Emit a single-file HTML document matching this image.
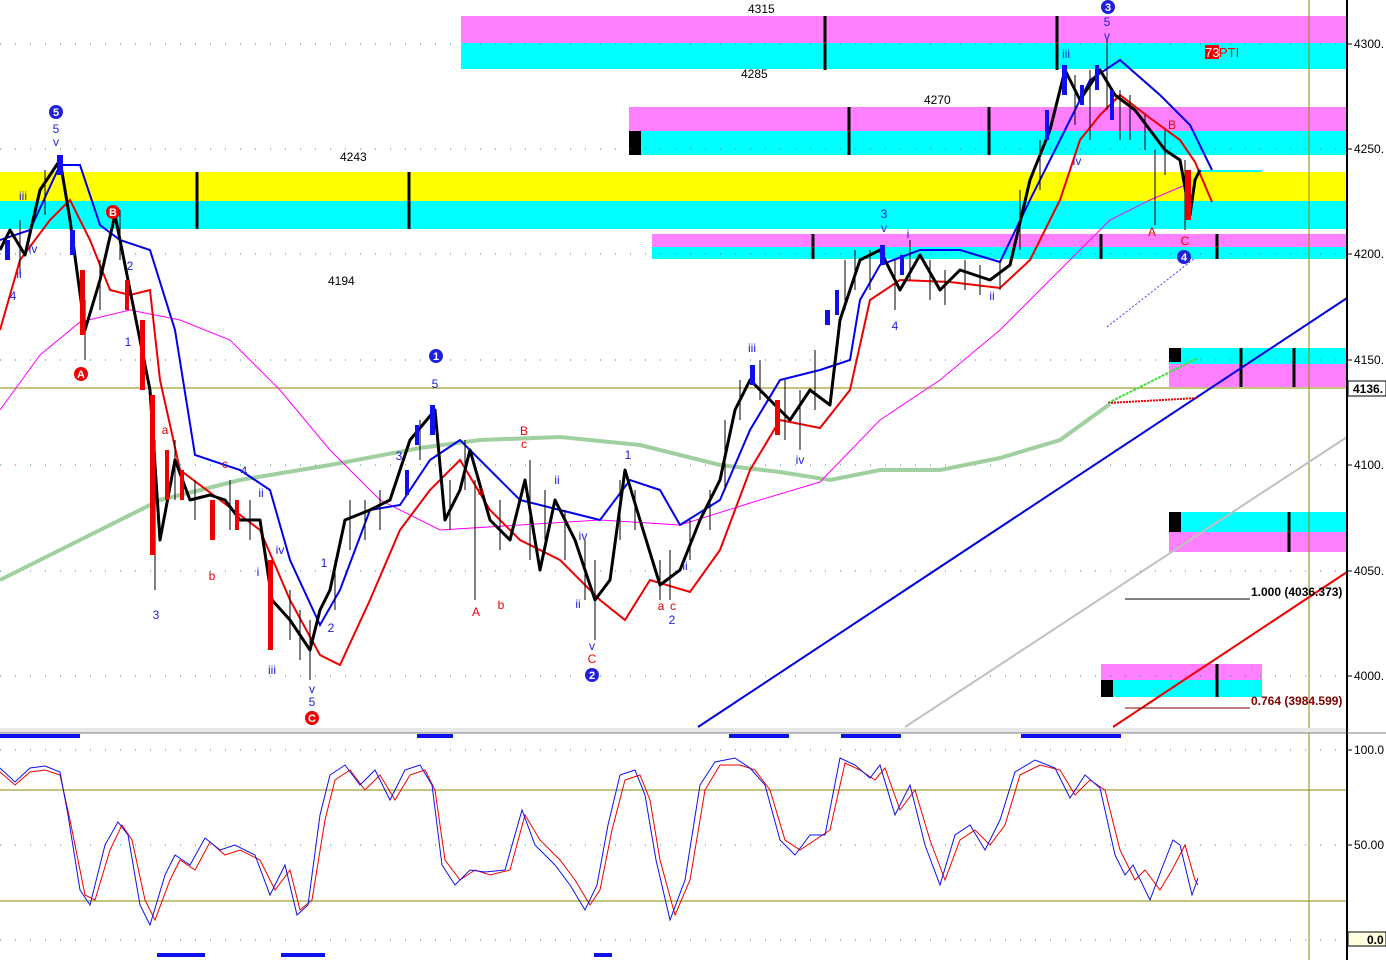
<!DOCTYPE html>
<html><head><meta charset="utf-8"><style>
html,body{margin:0;padding:0;background:#fff;}
svg{display:block;font-family:"Liberation Sans",sans-serif;}
</style></head><body>
<svg width="1386" height="960" viewBox="0 0 1386 960" xmlns="http://www.w3.org/2000/svg">
<rect width="1386" height="960" fill="#fff"/>
<rect x="461" y="16" width="886" height="27" fill="#ff80ff"/>
<rect x="461" y="43" width="886" height="26" fill="#00ffff"/>
<rect x="629" y="107" width="718" height="24" fill="#ff80ff"/>
<rect x="629" y="131" width="718" height="24" fill="#00ffff"/>
<rect x="629" y="131" width="12" height="24" fill="#000"/>
<rect x="0" y="172" width="1347" height="29" fill="#ffff00"/>
<rect x="0" y="201" width="1347" height="28" fill="#00ffff"/>
<rect x="1200" y="170" width="62" height="2" fill="#00ffff"/>
<rect x="652" y="234" width="695" height="13" fill="#ff80ff"/>
<rect x="652" y="247" width="695" height="12" fill="#00ffff"/>
<rect x="1169" y="348" width="178" height="16" fill="#00ffff"/>
<rect x="1169" y="364" width="178" height="23" fill="#ff80ff"/>
<rect x="1169" y="348" width="12" height="14" fill="#000"/>
<rect x="1169" y="512" width="178" height="20" fill="#00ffff"/>
<rect x="1169" y="532" width="178" height="20" fill="#ff80ff"/>
<rect x="1169" y="512" width="12" height="20" fill="#000"/>
<rect x="1101" y="664" width="161" height="16" fill="#ff80ff"/>
<rect x="1101" y="680" width="161" height="17" fill="#00ffff"/>
<rect x="1101" y="680" width="12" height="17" fill="#000"/>
<g stroke="#2a8a8a" stroke-width="1" stroke-dasharray="1,14">
<line x1="0" y1="44" x2="1347" y2="44"/><line x1="0" y1="149" x2="1347" y2="149"/>
<line x1="0" y1="254" x2="1347" y2="254"/><line x1="0" y1="360" x2="1347" y2="360"/>
<line x1="0" y1="465" x2="1347" y2="465"/><line x1="0" y1="571" x2="1347" y2="571"/>
<line x1="0" y1="676" x2="1347" y2="676"/>
<line x1="0" y1="750" x2="1347" y2="750"/><line x1="0" y1="845" x2="1347" y2="845"/><line x1="0" y1="940" x2="1347" y2="940"/>
</g>
<g stroke="#000" stroke-width="3">
<line x1="825" y1="16" x2="825" y2="70"/><line x1="1057" y1="16" x2="1057" y2="70"/>
<line x1="849" y1="107" x2="849" y2="155"/><line x1="989" y1="107" x2="989" y2="155"/>
<line x1="197" y1="172" x2="197" y2="229"/><line x1="409" y1="172" x2="409" y2="229"/>
<line x1="813" y1="234" x2="813" y2="259"/><line x1="1101" y1="234" x2="1101" y2="259"/><line x1="1217" y1="234" x2="1217" y2="259"/>
<line x1="1241" y1="348" x2="1241" y2="387"/><line x1="1294" y1="348" x2="1294" y2="387"/>
<line x1="1289" y1="512" x2="1289" y2="552"/><line x1="1217" y1="664" x2="1217" y2="697"/>
</g>
<line x1="0" y1="388" x2="1347" y2="388" stroke="#8a8a00" stroke-width="1"/>
<line x1="1309" y1="0" x2="1309" y2="960" stroke="#8a8a00" stroke-width="1"/>
<line x1="698" y1="727" x2="1347" y2="298" stroke="#0000dd" stroke-width="2"/>
<line x1="905" y1="727" x2="1347" y2="437" stroke="#c0c0c0" stroke-width="2"/>
<line x1="1113" y1="727" x2="1347" y2="572" stroke="#ee0000" stroke-width="2"/>
<line x1="1107" y1="327" x2="1195" y2="258" stroke="#4040ff" stroke-width="1" stroke-dasharray="2,2"/>
<line x1="1108" y1="403" x2="1198" y2="358" stroke="#40dd40" stroke-width="2" stroke-dasharray="3,1"/>
<line x1="1108" y1="403" x2="1198" y2="398" stroke="#ee0000" stroke-width="2" stroke-dasharray="2,1"/>
<line x1="1125" y1="599" x2="1250" y2="599" stroke="#000"/>
<line x1="1125" y1="708" x2="1250" y2="708" stroke="#800000"/>
<text x="1251" y="596" font-size="12" font-weight="bold" fill="#000">1.000 (4036.373)</text>
<text x="1251" y="705" font-size="12" font-weight="bold" fill="#800000">0.764 (3984.599)</text>
<polyline fill="none" stroke="#a0d0a0" stroke-width="4" points="0,580 80,540 160,500 240,480 330,465 420,448 480,440 560,437 640,445 720,465 780,472 830,480 880,470 940,470 1000,458 1060,440 1110,404"/>
<polyline fill="none" stroke="#ff00ff" stroke-width="1" points="0,410 40,355 80,322 130,310 180,320 230,340 280,390 330,450 380,500 440,530 520,525 600,520 680,525 760,500 820,482 880,420 940,380 1000,330 1060,270 1110,220 1150,200 1190,183"/>
<polyline fill="none" stroke="#0000ee" stroke-width="2" points="0,240 30,230 60,165 80,165 100,225 120,240 150,250 175,330 195,455 240,470 270,490 290,560 320,625 340,590 370,510 400,505 430,460 460,440 490,470 520,500 560,510 600,520 630,480 660,490 680,525 720,500 750,430 780,380 820,370 850,360 860,300 880,265 920,250 960,250 1000,262 1030,200 1060,140 1090,80 1120,60 1160,95 1190,125 1212,170"/>
<polyline fill="none" stroke="#ee0000" stroke-width="2" points="0,330 20,260 50,220 70,200 90,240 110,290 130,295 150,290 160,380 180,470 220,500 260,530 290,600 320,655 340,665 370,600 400,530 430,490 460,460 490,510 520,540 560,560 600,600 625,620 650,580 690,592 720,550 750,470 780,420 820,428 850,390 870,300 900,280 950,282 1000,288 1030,260 1060,200 1080,140 1100,115 1120,95 1150,118 1180,140 1195,162 1212,202"/>
<polyline fill="none" stroke="#000" stroke-width="3" stroke-linejoin="round" points="0,250 10,230 25,255 40,190 60,160 70,220 85,330 100,280 115,215 130,290 150,390 160,540 175,460 190,500 210,495 225,500 240,520 260,520 272,600 290,620 310,650 320,610 330,590 345,520 370,510 390,500 410,440 435,410 445,520 460,490 470,450 490,520 510,540 525,480 540,570 555,500 575,540 595,600 610,580 625,470 640,520 660,585 680,570 700,520 720,480 735,410 750,380 770,400 790,420 810,390 830,405 840,320 860,260 880,250 900,290 920,255 940,290 960,270 990,280 1010,265 1030,180 1050,130 1065,70 1080,100 1100,70 1115,95 1135,110 1150,130 1165,150 1180,160 1190,215 1195,180 1200,170"/>
<g stroke="#000" stroke-width="1">
<line x1="85" y1="300" x2="85" y2="360"/><line x1="155" y1="440" x2="155" y2="590"/><line x1="310" y1="620" x2="310" y2="680"/>
<line x1="475" y1="480" x2="475" y2="600"/><line x1="595" y1="560" x2="595" y2="640"/><line x1="660" y1="560" x2="660" y2="600"/>
<line x1="1155" y1="150" x2="1155" y2="225"/><line x1="1185" y1="160" x2="1185" y2="230"/><line x1="1107" y1="40" x2="1107" y2="110"/>
<line x1="20" y1="220" x2="20" y2="275"/><line x1="45" y1="170" x2="45" y2="215"/><line x1="100" y1="260" x2="100" y2="310"/><line x1="120" y1="210" x2="120" y2="260"/>
<line x1="175" y1="440" x2="175" y2="500"/><line x1="195" y1="480" x2="195" y2="520"/><line x1="230" y1="480" x2="230" y2="530"/><line x1="250" y1="500" x2="250" y2="540"/>
<line x1="290" y1="590" x2="290" y2="640"/><line x1="300" y1="610" x2="300" y2="660"/><line x1="335" y1="560" x2="335" y2="610"/><line x1="350" y1="500" x2="350" y2="550"/>
<line x1="365" y1="500" x2="365" y2="540"/><line x1="380" y1="490" x2="380" y2="530"/><line x1="420" y1="420" x2="420" y2="460"/><line x1="450" y1="480" x2="450" y2="530"/>
<line x1="465" y1="440" x2="465" y2="490"/><line x1="500" y1="500" x2="500" y2="550"/><line x1="530" y1="460" x2="530" y2="560"/><line x1="545" y1="490" x2="545" y2="540"/>
<line x1="565" y1="510" x2="565" y2="560"/><line x1="585" y1="540" x2="585" y2="600"/><line x1="620" y1="480" x2="620" y2="540"/><line x1="635" y1="490" x2="635" y2="530"/>
<line x1="670" y1="550" x2="670" y2="600"/><line x1="690" y1="520" x2="690" y2="560"/><line x1="710" y1="490" x2="710" y2="530"/><line x1="725" y1="420" x2="725" y2="490"/>
<line x1="740" y1="380" x2="740" y2="420"/><line x1="760" y1="360" x2="760" y2="400"/><line x1="785" y1="380" x2="785" y2="440"/><line x1="800" y1="390" x2="800" y2="450"/>
<line x1="815" y1="350" x2="815" y2="410"/><line x1="845" y1="260" x2="845" y2="310"/><line x1="855" y1="250" x2="855" y2="290"/><line x1="870" y1="250" x2="870" y2="290"/>
<line x1="895" y1="260" x2="895" y2="310"/><line x1="910" y1="240" x2="910" y2="280"/><line x1="930" y1="260" x2="930" y2="300"/><line x1="945" y1="270" x2="945" y2="305"/>
<line x1="965" y1="260" x2="965" y2="290"/><line x1="980" y1="265" x2="980" y2="295"/><line x1="1000" y1="260" x2="1000" y2="290"/><line x1="1020" y1="190" x2="1020" y2="250"/>
<line x1="1040" y1="140" x2="1040" y2="190"/><line x1="1075" y1="75" x2="1075" y2="125"/><line x1="1090" y1="70" x2="1090" y2="140"/><line x1="1120" y1="90" x2="1120" y2="140"/>
<line x1="1130" y1="95" x2="1130" y2="140"/><line x1="1145" y1="115" x2="1145" y2="150"/><line x1="1165" y1="130" x2="1165" y2="175"/>
</g>
<g fill="#1010ee"><rect x="57" y="155" width="6" height="20"/><rect x="430" y="405" width="5" height="30"/><rect x="1062" y="65" width="5" height="30"/><rect x="880" y="245" width="5" height="20"/><rect x="750" y="365" width="5" height="20"/><rect x="825" y="310" width="5" height="15"/>
<rect x="5" y="240" width="5" height="20"/><rect x="70" y="230" width="5" height="25"/><rect x="405" y="470" width="4" height="25"/><rect x="415" y="425" width="4" height="20"/><rect x="1045" y="110" width="4" height="30"/><rect x="1080" y="85" width="4" height="20"/><rect x="1095" y="65" width="4" height="25"/><rect x="1110" y="90" width="4" height="30"/><rect x="835" y="290" width="4" height="25"/><rect x="900" y="255" width="4" height="20"/></g>
<g fill="#ee0000"><rect x="150" y="395" width="5" height="160"/><rect x="268" y="560" width="5" height="90"/><rect x="80" y="270" width="5" height="65"/><rect x="1185" y="170" width="6" height="50"/><rect x="210" y="500" width="5" height="40"/><rect x="775" y="400" width="5" height="35"/>
<rect x="140" y="320" width="5" height="70"/><rect x="165" y="450" width="4" height="50"/><rect x="180" y="470" width="4" height="30"/><rect x="235" y="500" width="4" height="30"/><rect x="125" y="280" width="4" height="30"/></g>
<g font-size="12" fill="#000">
<text x="748" y="13">4315</text><text x="741" y="78">4285</text><text x="924" y="104">4270</text>
<text x="340" y="161">4243</text><text x="328" y="285">4194</text>
</g>
<g font-size="12" fill="#2020dd" text-anchor="middle">
<text x="56" y="133">5</text><text x="56" y="146">v</text><text x="23" y="200">iii</text><text x="33" y="253">iv</text><text x="13" y="300">4</text>
<text x="130" y="270">2</text><text x="128" y="346">1</text><text x="156" y="619">3</text><text x="244" y="475">4</text><text x="258" y="576">i</text><text x="261" y="497">ii</text>
<text x="280" y="554">iv</text><text x="272" y="674">iii</text><text x="312" y="693">v</text><text x="312" y="706">5</text><text x="324" y="567">1</text><text x="331" y="632">2</text>
<text x="399" y="460">3</text><text x="435" y="388">5</text><text x="557" y="484">ii</text><text x="583" y="540">iv</text><text x="578" y="608">ii</text><text x="592" y="650">v</text>
<text x="628" y="459">1</text><text x="672" y="624">2</text><text x="685" y="570">ii</text><text x="752" y="352">iii</text><text x="800" y="464">iv</text>
<text x="884" y="218">3</text><text x="884" y="232">v</text><text x="908" y="238">i</text><text x="895" y="330">4</text><text x="992" y="300">ii</text>
<text x="1066" y="58">iii</text><text x="1077" y="165">iv</text><text x="1107" y="26">5</text><text x="1107" y="40">v</text><text x="19" y="278">ii</text>
</g>
<g font-size="12" fill="#ee0000" text-anchor="middle">
<text x="165" y="434">a</text><text x="225" y="468">c</text><text x="212" y="580">b</text><text x="524" y="435">B</text><text x="524" y="448">c</text>
<text x="481" y="495">a</text><text x="476" y="616">A</text><text x="501" y="609">b</text><text x="592" y="663">C</text><text x="661" y="610">a</text><text x="673" y="610">c</text>
<text x="1152" y="236">A</text><text x="1172" y="129">B</text><text x="1185" y="245">C</text>
</g>
<g font-size="11" font-weight="bold" fill="#fff" text-anchor="middle">
<circle cx="56" cy="112" r="7" fill="#2020dd"/><text x="56" y="116">5</text>
<circle cx="113" cy="212" r="7" fill="#ee0000"/><text x="113" y="216">B</text>
<circle cx="81" cy="374" r="7" fill="#ee0000"/><text x="81" y="378">A</text>
<circle cx="312" cy="718" r="7" fill="#ee0000"/><text x="312" y="722">C</text>
<circle cx="436" cy="356" r="7" fill="#2020dd"/><text x="436" y="360">1</text>
<circle cx="592" cy="675" r="7" fill="#2020dd"/><text x="592" y="679">2</text>
<circle cx="1108" cy="7" r="7" fill="#2020dd"/><text x="1108" y="11">3</text>
<circle cx="1184" cy="257" r="7" fill="#2020dd"/><text x="1184" y="261">4</text>
</g>
<rect x="1205" y="45" width="14" height="14" fill="#ee0000"/>
<text x="1205" y="57" font-size="13" fill="#fff">73</text><text x="1219" y="57" font-size="13" fill="#ee0000">PTI</text>
<rect x="0" y="728" width="1386" height="5" fill="#e8e8e8"/>
<line x1="0" y1="733" x2="1386" y2="733" stroke="#808080"/>
<line x1="0" y1="790" x2="1347" y2="790" stroke="#8a8a00"/>
<line x1="0" y1="901" x2="1347" y2="901" stroke="#8a8a00"/>
<g fill="#1010ee"><rect x="0" y="734" width="80" height="4"/><rect x="417" y="734" width="36" height="4"/><rect x="729" y="734" width="60" height="4"/><rect x="841" y="734" width="60" height="4"/><rect x="1021" y="734" width="100" height="4"/>
<rect x="157" y="953" width="48" height="4"/><rect x="281" y="953" width="44" height="4"/><rect x="594" y="953" width="18" height="4"/></g>
<polyline fill="none" stroke="#ee0000" stroke-width="1" points="0,772 15,785 30,772 45,770 60,775 70,820 85,895 95,900 110,850 122,825 132,840 145,900 155,920 170,880 180,860 195,870 210,842 225,855 240,850 260,860 275,890 290,870 300,910 312,900 325,820 335,780 350,770 365,790 380,775 395,800 410,775 425,770 435,790 445,860 460,880 475,870 490,875 510,870 525,815 540,840 560,860 575,880 590,905 600,890 612,830 625,780 640,775 650,800 660,860 675,915 690,880 705,790 720,765 740,765 755,770 770,790 785,840 800,850 815,840 830,830 845,763 860,770 875,780 885,768 900,810 915,790 930,840 945,880 960,840 975,830 990,845 1005,825 1020,775 1040,765 1060,770 1075,795 1090,780 1105,790 1120,850 1135,880 1145,870 1160,890 1172,870 1185,845 1195,880 1198,885"/>
<polyline fill="none" stroke="#1010ee" stroke-width="1" points="0,768 15,782 30,768 45,766 60,772 68,815 80,890 90,905 105,845 118,822 128,835 140,905 150,925 165,875 175,855 190,865 205,838 220,850 235,845 255,855 270,895 285,865 297,915 308,905 320,815 330,775 345,765 360,785 375,770 390,800 405,770 420,765 432,785 442,865 455,885 470,870 485,872 505,870 522,810 535,845 555,865 570,885 585,910 597,885 608,825 620,775 635,770 645,795 656,860 670,920 685,880 700,785 715,762 735,758 750,768 765,785 780,840 795,855 810,835 825,835 840,758 855,765 870,778 880,765 895,815 910,785 925,845 940,885 955,835 970,825 985,850 1000,820 1015,772 1035,760 1055,768 1070,798 1085,775 1100,788 1115,855 1125,875 1133,865 1150,900 1162,868 1173,840 1180,845 1192,895 1198,878"/>
<rect x="1348" y="0" width="38" height="960" fill="#fff"/>
<line x1="1347" y1="0" x2="1347" y2="960" stroke="#000" stroke-width="2"/>
<line x1="1347" y1="733" x2="1386" y2="733" stroke="#808080"/>
<g stroke="#000"><line x1="1347" y1="44" x2="1352" y2="44"/><line x1="1347" y1="149" x2="1352" y2="149"/><line x1="1347" y1="254" x2="1352" y2="254"/><line x1="1347" y1="360" x2="1352" y2="360"/><line x1="1347" y1="465" x2="1352" y2="465"/><line x1="1347" y1="571" x2="1352" y2="571"/><line x1="1347" y1="676" x2="1352" y2="676"/><line x1="1347" y1="750" x2="1352" y2="750"/><line x1="1347" y1="845" x2="1352" y2="845"/></g>
<g font-size="12" fill="#000">
<text x="1354" y="48">4300.</text><text x="1354" y="153">4250.</text><text x="1354" y="258">4200.</text><text x="1354" y="364">4150.</text>
<text x="1354" y="469">4100.</text><text x="1354" y="575">4050.</text><text x="1354" y="680">4000.</text>
<text x="1354" y="754">100.0</text><text x="1354" y="849">50.00</text>
</g>
<rect x="1348" y="381" width="38" height="15" fill="#fff" stroke="#000"/>
<text x="1353" y="393" font-size="12" font-weight="bold">4136.</text>
<rect x="1348" y="932" width="38" height="14" fill="#ffffe0" stroke="#000"/>
<text x="1367" y="944" font-size="12" font-weight="bold">0.0</text>
</svg>
</body></html>
